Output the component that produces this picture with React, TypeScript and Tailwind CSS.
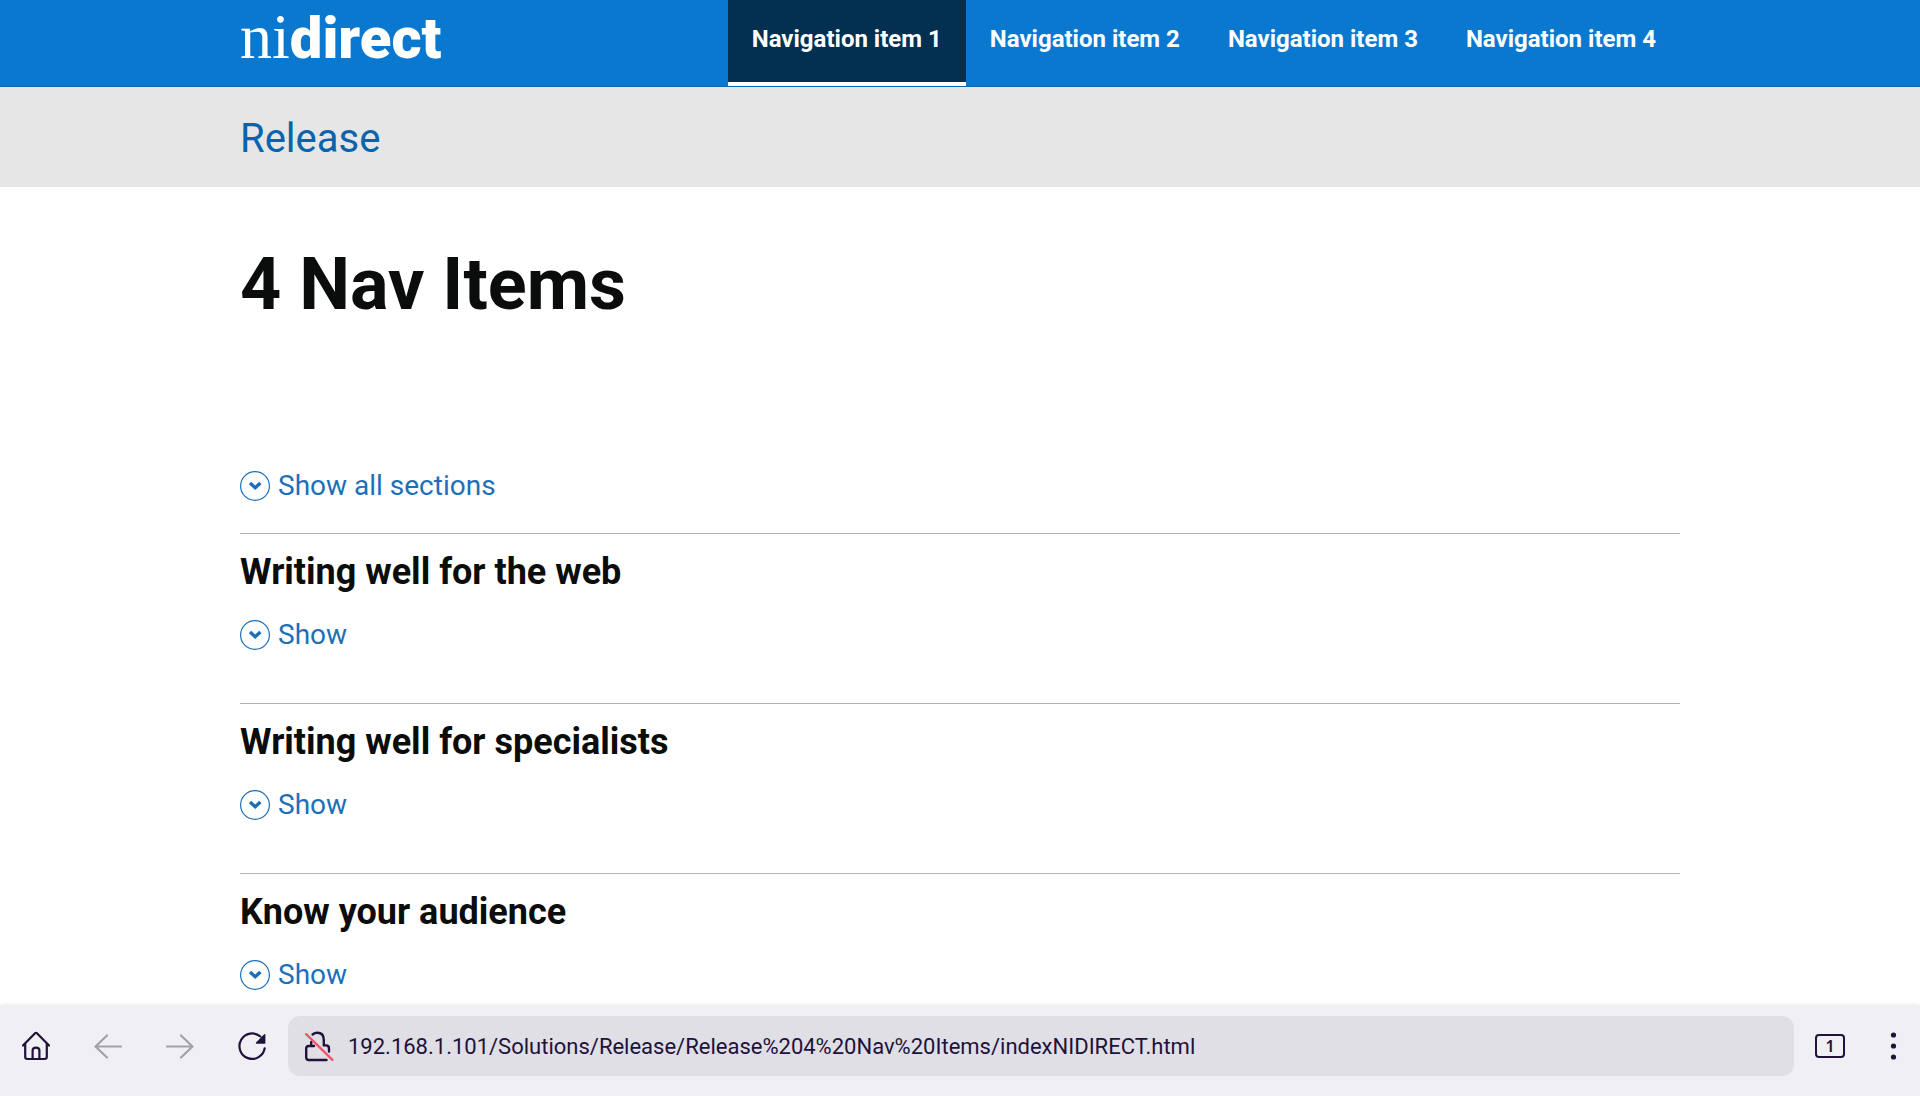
import { useState } from "react";

const navItems = ["Navigation item 1", "Navigation item 2", "Navigation item 3", "Navigation item 4"];
const sections = ["Writing well for the web", "Writing well for specialists", "Know your audience"];

function ChevronCircle() {
  return (
    <svg className="size-[30px] shrink-0" viewBox="0 0 30 30" fill="none" stroke="#1d70b8" aria-hidden="true">
      <circle cx="15" cy="15" r="14.4" strokeWidth="1.2" />
      <path d="M10 12 L15.2 16.8 L20.4 12" strokeWidth="3.4" />
    </svg>
  );
}

function ShowButton({ label, describedBy }: { label: string; describedBy?: string }) {
  return (
    <button type="button" aria-expanded="false" aria-describedby={describedBy} className="flex items-center gap-2 text-[28px] leading-10 text-[#1d70b8]">
      <ChevronCircle />
      {label}
    </button>
  );
}

function SiteHeader() {
  return (
    <header className="border-b border-[#0a68b0] bg-[#0b78d0]">
      <div className="mx-auto flex h-[86px] max-w-[1440px] justify-between">
        <a href="#home" aria-label="nidirect" className="flex h-[74px] items-baseline leading-[74px] text-white">
          <span className="font-['Liberation_Serif',serif] text-[64px]">ni</span>
          <span className="text-[58px] font-black">direct</span>
        </a>
        <nav aria-label="Main" className="flex">
          {navItems.map((item, i) => (
            <a
              key={item}
              href="#nav"
              aria-current={i === 0 ? "page" : undefined}
              className={
                i === 0
                  ? "border-b-4 border-white bg-[#032f50] px-6 pt-5 text-2xl leading-[38px] font-bold text-white"
                  : "px-6 pt-5 text-2xl leading-[38px] font-bold text-white"
              }
            >
              {item}
            </a>
          ))}
        </nav>
      </div>
    </header>
  );
}

function BrowserBar() {
  const [url, setUrl] = useState("192.168.1.101/Solutions/Release/Release%204%20Nav%20Items/indexNIDIRECT.html");
  return (
    <div className="relative flex h-[90px] shrink-0 items-center bg-[#f0f0f4] pb-2.5 text-[#15141a] shadow-[0_0_5px_rgba(0,0,0,0.14)]">
      <button type="button" aria-label="Home" className="flex w-18 justify-center">
        <svg className="size-8" viewBox="0 0 32 32" fill="none" stroke="#20123a" strokeWidth="2.2" strokeLinecap="round" strokeLinejoin="round">
          <path d="M3 15.5 L14.8 3.4 Q16 2.4 17.2 3.4 L29 15.5" />
          <path d="M5.2 14 V26.8 Q5.2 29 7.4 29 H24.6 Q26.8 29 26.8 26.8 V14" />
          <path d="M12.6 29 V20.5 Q12.6 17.6 16 17.6 Q19.4 17.6 19.4 20.5 V29" />
        </svg>
      </button>
      <button type="button" aria-label="Back" className="flex w-18 justify-center">
        <svg className="size-8" viewBox="0 0 32 32" fill="none" stroke="#a19fa9" strokeWidth="2.2" strokeLinecap="round" strokeLinejoin="round">
          <path d="M29 16.5 H3.5 M15 5.5 L3.5 16.5 L15 27.5" />
        </svg>
      </button>
      <button type="button" aria-label="Forward" className="flex w-18 justify-center">
        <svg className="size-8" viewBox="0 0 32 32" fill="none" stroke="#a19fa9" strokeWidth="2.2" strokeLinecap="round" strokeLinejoin="round">
          <path d="M3 16.5 H28.5 M17 5.5 L28.5 16.5 L17 27.5" />
        </svg>
      </button>
      <button type="button" aria-label="Reload" className="flex w-18 justify-center">
        <svg className="size-8" viewBox="0 0 32 32" fill="none" stroke="#20123a" strokeWidth="2.2" strokeLinecap="round">
          <path d="M28.7 18.3 A12.7 12.7 0 1 1 24.4 6.5" />
          <path d="M28.7 4.8 V13 H20.5 Z" fill="#20123a" strokeWidth="1.4" strokeLinejoin="round" />
        </svg>
      </button>
      <div className="flex h-[60px] flex-1 items-center rounded-xl bg-[#e0dfe6]">
        <button type="button" aria-label="Connection not secure" className="flex w-[60px] justify-center">
          <svg className="size-8" viewBox="0 0 32 32" fill="none" stroke="#20123a" strokeWidth="2.4" strokeLinecap="round" strokeLinejoin="round">
            <path d="M9.2 12 V15.4 M10.6 4.5 Q12.6 2.8 15.3 2.8 Q21.8 2.8 21.8 10 V15.4 H24 Q27 15.4 27 18.4 V21.5" />
            <path d="M24.5 30 H6.8 Q4.2 30 4.2 27.4 V18.6 Q4.2 16 6.8 16 H12" />
            <path d="M4.2 4.2 L30.4 29.8" stroke="#f2566a" />
          </svg>
        </button>
        <input
          aria-label="Address"
          value={url}
          onChange={(e) => setUrl(e.target.value)}
          className="h-10 min-w-0 flex-1 bg-transparent text-[22px] text-[#20123a] outline-none"
        />
      </div>
      <button type="button" aria-label="Open tabs" className="flex w-[72px] justify-center">
        <span className="flex h-6 w-[30px] items-center justify-center rounded-[4px] border-2 border-[#20123a] font-['Noto_Sans',sans-serif] text-base leading-5 font-semibold text-[#20123a]">
          1
        </span>
      </button>
      <button type="button" aria-label="Menu" className="flex w-[54px] justify-center">
        <svg className="h-8 w-6" viewBox="0 0 24 32" fill="#20123a">
          <circle cx="12.5" cy="5" r="2.6" />
          <circle cx="12.5" cy="16" r="2.6" />
          <circle cx="12.5" cy="27" r="2.6" />
        </svg>
      </button>
    </div>
  );
}

export default function App() {
  return (
    <div className="flex h-screen flex-col bg-white font-['Roboto',sans-serif] text-[#0b0c0c]">
      <div className="min-h-0 flex-1 overflow-hidden">
        <SiteHeader />
        <div className="bg-[#e6e6e6]">
          <div className="mx-auto max-w-[1440px] pt-6 pb-5">
            <a href="#release" className="block text-[40px] leading-[56px] text-[#0a64ad]">
              Release
            </a>
          </div>
        </div>
        <main className="mx-auto max-w-[1440px]">
          <h1 className="pt-[51px] pb-[133px] text-7xl leading-[94px] font-bold">4 Nav Items</h1>
          <div className="pt-px pb-[27px]">
            <ShowButton label="Show all sections" />
          </div>
          {sections.map((title, i) => (
            <section key={title} className="h-[170px] border-t border-[#b1b4b6] pt-3">
              <h2 id={`section-${i}`} className="text-4xl leading-[52px] font-bold">
                {title}
              </h2>
              <div className="pt-[17px]">
                <ShowButton label="Show" describedBy={`section-${i}`} />
              </div>
            </section>
          ))}
        </main>
      </div>
      <BrowserBar />
    </div>
  );
}
